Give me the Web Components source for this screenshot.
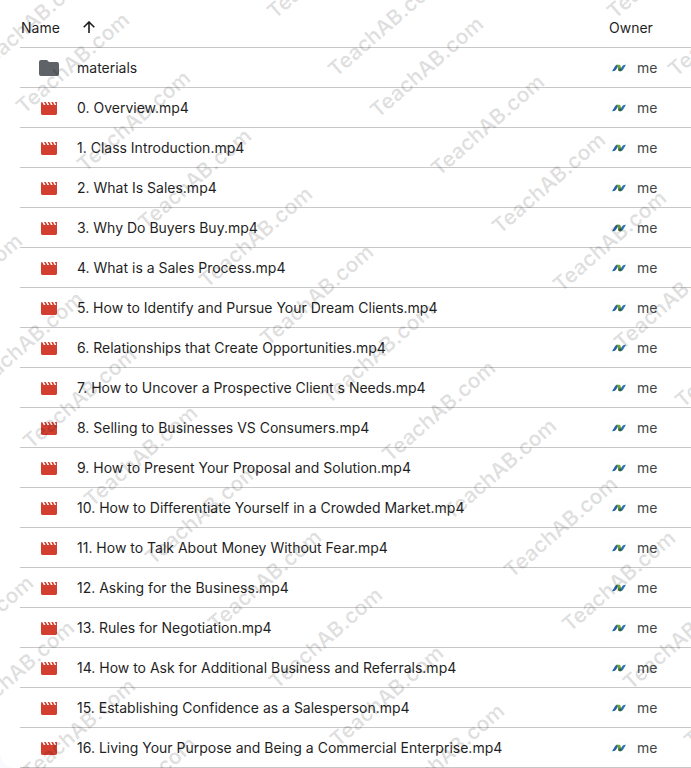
<!DOCTYPE html>
<html lang="en">
<head>
<meta charset="utf-8">
<meta name="viewport" content="width=device-width, initial-scale=1">
<title>Files</title>
<style>
  body {
    margin: 0;
    background: #f8fafd;
    color: #1f1f1f;
    font: 14px/20px Inter, Roboto, sans-serif;
  }
</style>
</head>
<body>
<file-page>
  <file-list></file-list>
</file-page>

<script>
const html = String.raw;

function makeTemplate(markup) {
  const template = document.createElement("template");
  template.innerHTML = markup;
  return template;
}

const files = [
  { name: "materials", type: "folder" },
  { name: "0. Overview.mp4" },
  { name: "1. Class Introduction.mp4" },
  { name: "2. What Is Sales.mp4" },
  { name: "3. Why Do Buyers Buy.mp4" },
  { name: "4. What is a Sales Process.mp4" },
  { name: "5. How to Identify and Pursue Your Dream Clients.mp4" },
  { name: "6. Relationships that Create Opportunities.mp4" },
  { name: "7. How to Uncover a Prospective Client s Needs.mp4" },
  { name: "8. Selling to Businesses VS Consumers.mp4" },
  { name: "9. How to Present Your Proposal and Solution.mp4" },
  { name: "10. How to Differentiate Yourself in a Crowded Market.mp4" },
  { name: "11. How to Talk About Money Without Fear.mp4" },
  { name: "12. Asking for the Business.mp4" },
  { name: "13. Rules for Negotiation.mp4" },
  { name: "14. How to Ask for Additional Business and Referrals.mp4" },
  { name: "15. Establishing Confidence as a Salesperson.mp4" },
  { name: "16. Living Your Purpose and Being a Commercial Enterprise.mp4" },
];

const iconTemplates = {
  folder: makeTemplate(html`
    <svg width="20" height="16" viewBox="0 0 20 16">
      <path fill="#5f6368" d="M2 0h6l2 2h8a2 2 0 0 1 2 2v10a2 2 0 0 1-2 2H2a2 2 0 0 1-2-2V2a2 2 0 0 1 2-2z"/>
    </svg>
  `),
  video: makeTemplate(html`
    <svg width="16" height="14" viewBox="0 0 16 14">
      <path fill="#d23f31" d="M0 2.400Q0 1 1.200 1L2.800 4h1.700L3 1h1.800l1.600 3h1.700L6.600 1h1.800L10 4h1.700l-1.500-3H12l1.600 3h1.700L13.800 1H16v11.600Q16 14 14.600 14H1.400Q0 14 0 12.600z"/>
    </svg>
  `),
};

/** Icon of a row, chosen by the type attribute: "folder" or "video". */
class FileIcon extends HTMLElement {
  connectedCallback() {
    const root = this.attachShadow({ mode: "open" });
    root.innerHTML = html`
      <style>
        :host {
          display: flex;
          justify-content: center;
        }
      </style>
    `;
    const type = this.getAttribute("type");
    root.append(iconTemplates[type].content.cloneNode(true));
  }
}

const ownerTemplate = makeTemplate(html`
  <style>
    :host {
      display: flex;
      align-items: center;
      gap: 8px;
      color: #444746;
    }

    .avatar {
      box-sizing: border-box;
      width: 20px;
      height: 20px;
      border: 1px solid #fafafa;
      border-radius: 50%;
      display: grid;
      place-items: center;
    }
  </style>
  <span class="avatar">
    <svg width="14" height="8" viewBox="0 0 14 8" aria-hidden="true">
      <path fill="#2763a5" d="M0 7.300 3.200 2Q4 .7 5.800.700L6.400 2 3.800 6Q3 7.300 0 7.300z"/>
      <path fill="#2f72ba" d="M10.400 2Q11.200.700 14 .7L10.800 6Q10 7.300 8 7.300L7.600 6.300z"/>
      <path fill="#72a236" d="M4.600.7H7Q8.300.7 8.600 2L9.200 4.600 8.400 7.300Q6.600 7.300 6.300 6L5.600 2.600z"/>
      <path fill="#35692f" d="M6 4.600 9.200 4.300 9.400 6.600 8.400 7.300H7.800Q6.600 7.300 6.300 6z"/>
    </svg>
  </span>
  <slot></slot>
`);

class FileOwner extends HTMLElement {
  connectedCallback() {
    const root = this.attachShadow({ mode: "open" });
    root.append(ownerTemplate.content.cloneNode(true));
  }
}

const listTemplate = makeTemplate(html`
  <style>
    :host {
      display: block;
      padding: 8px 0 0 20px;
    }

    table {
      width: 100%;
      border-collapse: separate;
      border-spacing: 0;
      table-layout: fixed;
    }

    th,
    td {
      box-sizing: border-box;
      height: 40px;
      padding: 1px 0 0;
      border-bottom: 1px solid #c7c7c7;
      text-align: left;
      font-weight: 400;
      white-space: nowrap;
    }

    .icon {
      width: 57px;
    }

    .owner {
      width: 82px;
    }

    .heading {
      display: flex;
      align-items: center;
      gap: 23px;
      padding-left: 1px;
    }

    button {
      display: flex;
      padding: 0;
      border: 0;
      background: none;
      color: inherit;
    }
  </style>
  <table>
    <colgroup>
      <col class="icon">
      <col>
      <col class="owner">
    </colgroup>
    <thead>
      <tr>
        <th colspan="2" aria-sort="ascending">
          <div class="heading">
            Name
            <button type="button" aria-label="Reverse sort direction">
              <svg width="12" height="14" viewBox="0 0 12 14" fill="none" stroke="currentColor" stroke-width="1.600">
                <path d="M6 12V1M.7 6.300 6 1l5.300 5.300"/>
              </svg>
            </button>
          </div>
        </th>
        <th>Owner</th>
      </tr>
    </thead>
    <tbody></tbody>
  </table>
`);

const rowTemplate = makeTemplate(html`
  <table>
    <tr>
      <td><file-icon></file-icon></td>
      <td class="name"></td>
      <td><file-owner>me</file-owner></td>
    </tr>
  </table>
`);

class FileList extends HTMLElement {
  #ascending = true;
  #body;

  connectedCallback() {
    const root = this.attachShadow({ mode: "open" });
    root.append(listTemplate.content.cloneNode(true));
    this.#body = root.querySelector("tbody");
    root.querySelector("button").addEventListener("click", () => this.reverse());
    this.#render();
  }

  reverse() {
    this.#ascending = !this.#ascending;
    const sort = this.#ascending ? "ascending" : "descending";
    this.shadowRoot.querySelector("th").setAttribute("aria-sort", sort);
    this.#render();
  }

  #render() {
    const rows = files.map(({ name, type = "video" }) => {
      const row = rowTemplate.content.querySelector("tr").cloneNode(true);
      row.querySelector("file-icon").setAttribute("type", type);
      row.querySelector(".name").textContent = name;
      return row;
    });
    if (!this.#ascending) rows.reverse();
    this.#body.replaceChildren(...rows);
  }
}

// Each run is a diagonal of marks: first mark, then one every STEP.
const STEP = [61, 58];
const RUNS = [
  { x: -16, y: 73, count: 1 },
  { x: 275, y: 20, count: 2 },
  { x: 615, y: 20, count: 2 },
  { x: 24, y: 115, count: 9 },
  { x: 570, y: 633, count: 3 },
  { x: 378, y: 119, count: 6 },
  { x: -83, y: 336, count: 2 },
  { x: 31, y: 450, count: 3 },
  { x: 216, y: 632, count: 4 },
  { x: -72, y: 678, count: 1 },
  { x: -31, y: 723, count: 3 },
];

/** Repeats its text attribute diagonally over the page. */
class WaterMark extends HTMLElement {
  connectedCallback() {
    const root = this.attachShadow({ mode: "open" });
    const text = this.getAttribute("text");
    const marks = RUNS.flatMap(({ x, y, count }) =>
      Array.from({ length: count }, (_, i) => {
        const at = `${x + i * STEP[0]} ${y + i * STEP[1]}`;
        return `<text transform="translate(${at}) rotate(-41)">${text}</text>`;
      })
    );
    root.innerHTML = html`
      <style>
        :host {
          position: absolute;
          inset: 0;
          overflow: hidden;
          pointer-events: none;
        }

        svg {
          display: block;
          width: 100%;
          height: 100%;
          fill: #000;
          fill-opacity: 0.13;
          font: 600 21px Inter, sans-serif;
        }
      </style>
      <svg aria-hidden="true">${marks.join("")}</svg>
    `;
  }
}

const pageTemplate = makeTemplate(html`
  <style>
    :host {
      display: block;
      position: relative;
      background: #fff;
      border-bottom-left-radius: 16px;
    }
  </style>
  <slot></slot>
  <water-mark text="TeachAB.com"></water-mark>
`);

class FilePage extends HTMLElement {
  connectedCallback() {
    const root = this.attachShadow({ mode: "open" });
    root.append(pageTemplate.content.cloneNode(true));
  }
}

customElements.define("file-icon", FileIcon);
customElements.define("file-owner", FileOwner);
customElements.define("file-list", FileList);
customElements.define("water-mark", WaterMark);
customElements.define("file-page", FilePage);
</script>
</body>
</html>
